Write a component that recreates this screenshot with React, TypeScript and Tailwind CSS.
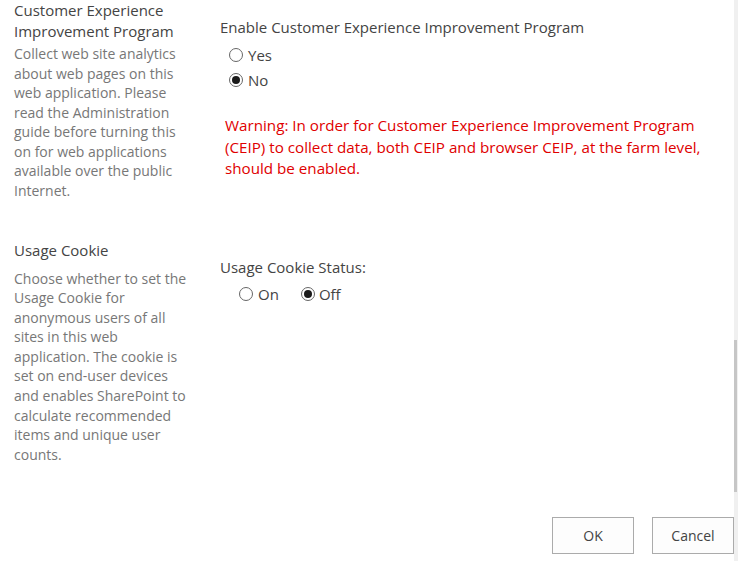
import React from "react";

function Radio({ checked }: { checked?: boolean }) {
  return (
    <span className="inline-flex h-[14px] w-[14px] shrink-0 items-center justify-center rounded-full border border-[#666] bg-white">
      {checked ? <span className="h-[8px] w-[8px] rounded-full bg-[#1a1a1a]" /> : null}
    </span>
  );
}

const desc1 = [
  "Collect web site analytics",
  "about web pages on this",
  "web application. Please",
  "read the Administration",
  "guide before turning this",
  "on for web applications",
  "available over the public",
  "Internet.",
];

const desc2 = [
  "Choose whether to set the",
  "Usage Cookie for",
  "anonymous users of all",
  "sites in this web",
  "application. The cookie is",
  "set on end-user devices",
  "and enables SharePoint to",
  "calculate recommended",
  "items and unique user",
  "counts.",
];

const warn = [
  "Warning: In order for Customer Experience Improvement Program",
  "(CEIP) to collect data, both CEIP and browser CEIP, at the farm level,",
  "should be enabled.",
];

export default function App() {
  return (
    <div
      className="relative h-[561px] w-[738px] overflow-hidden bg-white"
      style={{ fontFamily: "'Open Sans', 'Noto Sans', sans-serif" }}
    >
      {/* Section 1 */}
      <div className="flex pl-[14px]">
        <div className="w-[186px] shrink-0">
          <div className="mb-[2px] text-[15px] leading-[21px] text-[#444]">
            <div className="whitespace-nowrap">Customer Experience</div>
            <div className="whitespace-nowrap">Improvement Program</div>
          </div>
          <div className="text-[14px] leading-[19.5px] text-[#777]">
            {desc1.map((l) => (
              <div key={l} className="whitespace-nowrap">{l}</div>
            ))}
          </div>
        </div>
        <div className="pl-[20px] pt-[16.5px]">
          <div className="text-[15px] leading-[21px] text-[#444] whitespace-nowrap">
            Enable Customer Experience Improvement Program
          </div>
          <div className="mt-[5px] pl-[9px] text-[15px] text-[#444]">
            <label className="flex h-[25px] items-center gap-[5px]">
              <Radio />
              <span>Yes</span>
            </label>
            <label className="flex h-[25px] items-center gap-[5px]">
              <Radio checked />
              <span>No</span>
            </label>
          </div>
          <div className="mt-[22.75px] pl-[5px] text-[15.2px] leading-[21.5px] text-[#e00000]">
            {warn.map((l) => (
              <div key={l} className="whitespace-nowrap">{l}</div>
            ))}
          </div>
        </div>
      </div>

      {/* Section 2 */}
      <div className="mt-[39.5px] flex pl-[14px]">
        <div className="w-[186px] shrink-0">
          <div className="mb-[8px] text-[15px] leading-[21px] text-[#444]">Usage Cookie</div>
          <div className="text-[14px] leading-[19.6px] text-[#777]">
            {desc2.map((l) => (
              <div key={l} className="whitespace-nowrap">{l}</div>
            ))}
          </div>
        </div>
        <div className="pl-[20px] pt-[17px]">
          <div className="text-[15px] leading-[21px] text-[#444] whitespace-nowrap">Usage Cookie Status:</div>
          <div className="mt-[4px] flex h-[25px] items-center pl-[19px] text-[15px] text-[#444]">
            <label className="flex items-center gap-[5px]">
              <Radio />
              <span>On</span>
            </label>
            <label className="ml-[22px] flex items-center gap-[4px]">
              <Radio checked />
              <span>Off</span>
            </label>
          </div>
        </div>
      </div>

      {/* Buttons */}
      <div className="mt-[53px] flex justify-end gap-[18px] pr-[4px]">
        <button className="h-[37px] w-[82px] border border-[#ababab] bg-[#fdfdfd] text-[14px] text-[#444]">
          OK
        </button>
        <button className="h-[37px] w-[82px] border border-[#ababab] bg-[#fdfdfd] text-[14px] text-[#444]">
          Cancel
        </button>
      </div>

      {/* Scrollbar */}
      <div className="absolute right-0 top-0 h-full w-[4px] bg-[#f0f0f0]">
        <div className="absolute left-0 top-[340px] h-[152px] w-[3px] bg-[#c6c6c6]" />
      </div>
    </div>
  );
}
